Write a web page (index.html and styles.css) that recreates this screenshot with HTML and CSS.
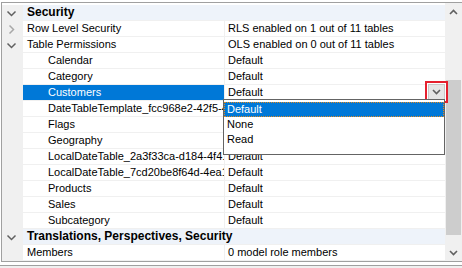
FILE: index.html
```html
<!DOCTYPE html>
<html>
<head>
<meta charset="utf-8">
<link rel="stylesheet" href="styles.css">
</head>
<body>
<div class="frame">
  <div class="grid">
    <div class="row cat">
      <div class="gut"><svg class="chev" width="11" height="7" viewBox="0 0 11 7"><path d="M1.5 1.5 L5.5 5.5 L9.5 1.5" /></svg></div>
      <div class="cattext">Security</div>
    </div>
    <div class="row">
      <div class="gut"><svg class="chev light" width="7" height="11" viewBox="0 0 7 11"><path d="M1.5 1.5 L5.5 5.5 L1.5 9.5" /></svg></div>
      <div class="name">Row Level Security</div>
      <div class="val">RLS enabled on 1 out of 11 tables</div>
    </div>
    <div class="row">
      <div class="gut"><svg class="chev" width="11" height="7" viewBox="0 0 11 7"><path d="M1.5 1.5 L5.5 5.5 L9.5 1.5" /></svg></div>
      <div class="name">Table Permissions</div>
      <div class="val">OLS enabled on 0 out of 11 tables</div>
    </div>
    <div class="row"><div class="gut"></div><div class="name sub">Calendar</div><div class="val">Default</div></div>
    <div class="row"><div class="gut"></div><div class="name sub">Category</div><div class="val">Default</div></div>
    <div class="row"><div class="gut"></div><div class="name sub selected">Customers</div><div class="val">Default</div></div>
    <div class="row"><div class="gut"></div><div class="name sub">DateTableTemplate_fcc968e2-42f5-4ce5-a1b8</div><div class="val">Default</div></div>
    <div class="row"><div class="gut"></div><div class="name sub">Flags</div><div class="val">Default</div></div>
    <div class="row"><div class="gut"></div><div class="name sub">Geography</div><div class="val">Default</div></div>
    <div class="row"><div class="gut"></div><div class="name sub">LocalDateTable_2a3f33ca-d184-4f41-9b1c</div><div class="val">Default</div></div>
    <div class="row"><div class="gut"></div><div class="name sub">LocalDateTable_7cd20be8f64d-4ea1-8c2f</div><div class="val">Default</div></div>
    <div class="row"><div class="gut"></div><div class="name sub">Products</div><div class="val">Default</div></div>
    <div class="row"><div class="gut"></div><div class="name sub">Sales</div><div class="val">Default</div></div>
    <div class="row"><div class="gut"></div><div class="name sub">Subcategory</div><div class="val">Default</div></div>
    <div class="row cat">
      <div class="gut"><svg class="chev" width="11" height="7" viewBox="0 0 11 7"><path d="M1.5 1.5 L5.5 5.5 L9.5 1.5" /></svg></div>
      <div class="cattext">Translations, Perspectives, Security</div>
    </div>
    <div class="row">
      <div class="gut"></div>
      <div class="name">Members</div>
      <div class="val">0 model role members</div>
    </div>
  </div>
  <div class="scroll">
    <div class="arrow"><svg width="9" height="6" viewBox="0 0 9 6"><path d="M1 5 L4.5 1.5 L8 5" /></svg></div>
    <div class="gap-top"></div>
    <div class="thumb"></div>
    <div class="gap-bot"></div>
    <div class="arrow"><svg width="9" height="6" viewBox="0 0 9 6"><path d="M1 1 L4.5 4.5 L8 1" /></svg></div>
  </div>

  <div class="dropbtn"><div class="btninner"><svg width="9" height="6" viewBox="0 0 9 6"><path d="M1 1 L4.5 4.5 L8 1" /></svg></div></div>
  <div class="droplist">
    <div class="item active">Default</div>
    <div class="item">None</div>
    <div class="item">Read</div>
  </div>
</div>
<div class="below"></div>
</body>
</html>
```

FILE: styles.css
```css
html, body {
  margin: 0;
  padding: 0;
  background: #ffffff;
}
body {
  font-family: "Liberation Sans", Arial, sans-serif;
  font-size: 11px;
  color: #000;
  width: 462px;
  height: 268px;
  overflow: hidden;
}
.frame {
  position: relative;
  margin: 2px 0 0 1px;
  width: 460px;
  border-top: 1px solid #a0a0a0;
  border-left: 1px solid #a0a0a0;
  border-bottom: 1px solid #a0a0a0;
  display: flex;
}
.grid {
  width: 443px;
  padding: 2px 0 0 0;
  background: #fff;
}
.row {
  display: grid;
  grid-template-columns: 21px 201px 221px;
  height: 16px;
}
.gut {
  background: #f0f0f0;
  display: flex;
  align-items: center;
  justify-content: center;
  padding-right: 2px;
}
.chev path {
  fill: none;
  stroke: #606060;
  stroke-width: 1.5;
}
.chev.light path {
  stroke: #a8a8a8;
}
.name, .val, .cattext {
  line-height: 15px;
  height: 15px;
  border-bottom: 1px solid #f0f0f0;
  white-space: nowrap;
  overflow: hidden;
}
.name {
  padding-left: 4px;
}
.name.sub {
  padding-left: 25px;
}
.name.selected {
  background: #0078d7;
  color: #fff;
}
.val {
  border-left: 1px solid #f0f0f0;
  padding-left: 3px;
}
.cat .cattext {
  grid-column: 2 / 4;
  background: #eef3fa;
  font-weight: bold;
  font-size: 12px;
  padding-left: 4px;
  overflow: visible;
}
.scroll {
  width: 17px;
  background: #f0f0f0;
  display: flex;
  flex-direction: column;
}
.arrow {
  height: 17px;
  display: flex;
  align-items: center;
  justify-content: center;
}
.arrow path, .btninner path {
  fill: none;
  stroke: #606060;
  stroke-width: 1.6;
}
.gap-top {
  height: 60px;
}
.thumb {
  height: 155px;
  background: #cdcdcd;
  margin: 0 1px;
}
.gap-bot {
  flex: 1;
}
.dropbtn {
  position: absolute;
  left: 423px;
  top: 78px;
  width: 17px;
  height: 16px;
  border: 2px solid #e5202e;
  background: #fff;
  padding: 1px;
}
.btninner {
  height: 14px;
  background: #e5e5e5;
  border: 1px solid #c8c8c8;
  display: flex;
  align-items: center;
  justify-content: center;
}
.droplist {
  position: absolute;
  left: 221px;
  top: 96px;
  width: 220px;
  height: 52px;
  border: 1px solid #646464;
  background: #fff;
  padding-top: 2px;
}
.item {
  height: 15px;
  line-height: 15px;
  padding-left: 3px;
}
.item.active {
  background: #0078d7;
  color: #fff;
  border: 1px dotted #e08a20;
  height: 13px;
  line-height: 13px;
  padding-left: 2px;
}
.below {
  margin-top: 3px;
  height: 3px;
  border-top: 1px solid #a0a0a0;
  background: #f0f0f0;
}
```
